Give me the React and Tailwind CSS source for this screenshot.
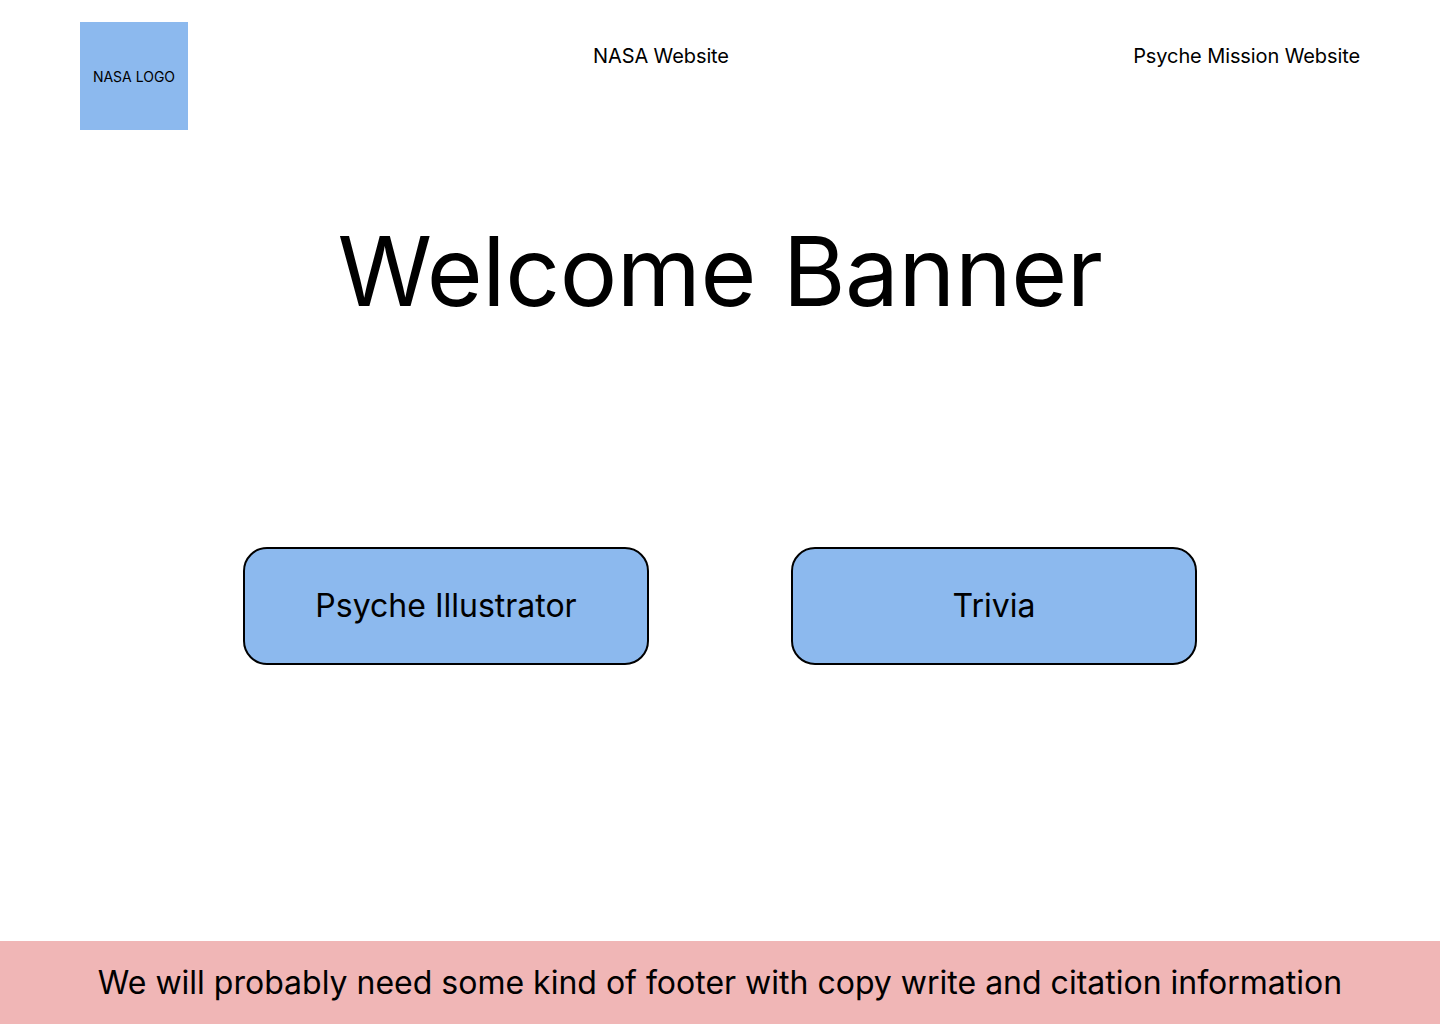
export default function App() {
  return (
    <div className="flex h-[1024px] w-full flex-col bg-white text-black font-['Inter',sans-serif]">
      <header className="flex items-start px-[80px] pt-[22px]">
        <div className="flex h-[108px] w-[108px] items-center justify-center bg-[#8cb9ee] text-[14px]">
          NASA LOGO
        </div>
        <a className="ml-[405px] mt-[22px] text-[20px] leading-[24px] tracking-[-0.1px]">NASA Website</a>
        <a className="ml-auto mt-[22px] text-[20px] leading-[24px] tracking-[-0.1px]">Psyche Mission Website</a>
      </header>

      <h1 className="mt-[93px] text-center text-[96px] leading-[96px] tracking-[-0.4px]">Welcome Banner</h1>

      <div className="mt-[228px] flex justify-center gap-[142px]">
        <button className="h-[118px] w-[406px] rounded-[24px] border-2 border-black bg-[#8cb9ee] text-[32px]">
          Psyche Illustrator
        </button>
        <button className="h-[118px] w-[406px] rounded-[24px] border-2 border-black bg-[#8cb9ee] text-[32px]">
          Trivia
        </button>
      </div>

      <div className="flex-1" />

      <footer className="flex h-[83px] items-center justify-center bg-[#f0b6b6] text-[32px]">
        We will probably need some kind of footer with copy write and citation information
      </footer>
    </div>
  );
}
